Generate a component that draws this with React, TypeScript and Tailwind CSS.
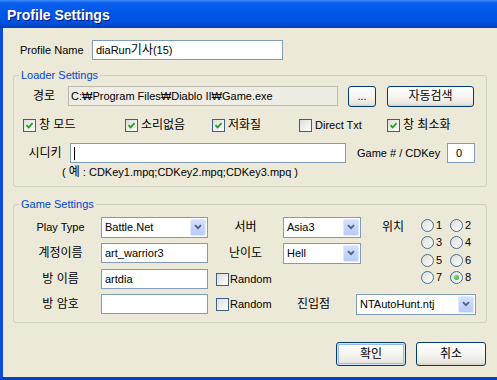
import React from "react";

const font = "font-['Liberation_Sans','Noto_Sans_CJK_KR',sans-serif]";

function Edit({ className, children }: { className: string; children?: React.ReactNode }) {
  return (
    <div className={`h-[20px] border border-[#7F9DB9] bg-white flex items-center pl-[3px] text-[11px] leading-[13px] whitespace-nowrap ${className}`}>
      {children}
    </div>
  );
}

function Combo({ className, value }: { className: string; value: string }) {
  return (
    <div className={`h-[21px] border border-[#7F9DB9] bg-white flex items-center pl-[3px] pr-[1px] ${className}`}>
      <span className="flex-1 text-[11px] leading-[13px]">{value}</span>
      <div className="w-[16px] h-[17px] rounded-[2px] border border-[#E2EAFD] bg-[linear-gradient(to_bottom,#D5E0FD,#B8CBF8)] flex items-center justify-center">
        <svg width="8" height="6" viewBox="0 0 8 6">
          <path d="M1 1.2 L4 4.2 L7 1.2" stroke="#4D6185" strokeWidth="1.8" fill="none" />
        </svg>
      </div>
    </div>
  );
}

function CheckBox({ checked }: { checked?: boolean }) {
  return (
    <span className="w-[13px] h-[13px] shrink-0 border border-[#3B6189] bg-[linear-gradient(135deg,#DCDCD7,#FFFFFF)] flex items-center justify-center">
      {checked && (
        <svg width="9" height="9" viewBox="0 0 9 9">
          <path d="M1.5 4.2 L3.6 6.4 L7.6 2.2" stroke="#21A121" strokeWidth="1.8" fill="none" />
        </svg>
      )}
    </span>
  );
}

function Radio({ on, label }: { on?: boolean; label: string }) {
  return (
    <div className="flex items-center gap-[2px]">
      <span className="w-[13px] h-[13px] rounded-full border border-[#4A6C8E] bg-[linear-gradient(135deg,#DCDCD7,#FFFFFF)] flex items-center justify-center">
        {on && <span className="w-[5px] h-[5px] rounded-full bg-[radial-gradient(circle_at_35%_35%,#7EE07A,#21A121)]" />}
      </span>
      <span className="text-[11px] leading-[13px]">{label}</span>
    </div>
  );
}

function Btn({ className, children, def }: { className: string; children: React.ReactNode; def?: boolean }) {
  return (
    <div
      className={`rounded-[3px] border border-[#003C74] bg-[linear-gradient(to_bottom,#FFFFFF,#F4F4F0_55%,#E8E6DF_88%,#D6D0C5)] flex items-center justify-center ${
        def ? "shadow-[inset_0_0_0_1px_#CEE7FF,inset_0_0_0_2px_#9DB9EB]" : ""
      } ${className}`}
    >
      {children}
    </div>
  );
}

function Checked({ w, checked, label, ko }: { w: string; checked?: boolean; label: string; ko?: boolean }) {
  return (
    <div className={`flex items-center gap-[3px] ${w}`}>
      <CheckBox checked={checked} />
      <span className={ko ? "text-[12px] leading-[14px]" : "text-[11px] leading-[13px]"}>{label}</span>
    </div>
  );
}

export default function App() {
  return (
    <div className={`w-[497px] h-[380px] flex flex-col overflow-hidden text-black ${font}`}>
      <div className="h-[28px] shrink-0 flex items-center pl-[7px] pt-[1px] bg-[linear-gradient(to_bottom,#3D8FFA_0%,#0B5FEE_10%,#0057E8_45%,#0052E0_80%,#0046CC_90%,#0A3DB0_100%)]">
        <span className="text-white font-bold text-[14px] leading-[16px] [text-shadow:1px_1px_#0A1883]">Profile Settings</span>
      </div>

      <div className="flex-1 bg-[#ECE9D8] border-l-[3px] border-b-[3px] border-l-[#0A4BD8] border-b-[#0A3FC0] flex flex-col">
        <div className="mt-[12px] h-[20px] flex items-center">
          <span className="ml-[17px] w-[72px] text-[11px] leading-[13px]">Profile Name</span>
          <Edit className="w-[191px]">
            diaRun<span className="text-[12px]">기사</span>(15)
          </Edit>
        </div>

        <fieldset className="mt-[9px] ml-[10px] w-[474px] h-[118px] border border-[#D0D0BF] rounded-[3px]">
          <legend className="ml-[5px] px-[2px] text-[11px] leading-[13px] text-[#0046D5]">Loader Settings</legend>

          <div className="mt-[4px] h-[20px] flex items-center">
            <span className="ml-[6px] w-[48px] text-center text-[12px] leading-[14px]">경로</span>
            <div className="w-[270px] h-[20px] border border-[#BDBBAD] bg-[#EFEDE3] flex items-center pl-[2px] text-[11px] leading-[13px] whitespace-nowrap">
              C:₩Program Files₩Diablo II₩Game.exe
            </div>
            <Btn className="ml-[10px] w-[28px] h-[21px]">
              <span className="text-[11px] leading-[13px]">...</span>
            </Btn>
            <Btn className="ml-[11px] w-[87px] h-[21px]">
              <span className="text-[12px] leading-[14px]">자동검색</span>
            </Btn>
          </div>

          <div className="mt-[11px] h-[16px] flex items-center pl-[9px]">
            <Checked w="w-[102px]" checked label="창 모드" ko />
            <Checked w="w-[87px]" checked label="소리없음" ko />
            <Checked w="w-[87px]" checked label="저화질" ko />
            <Checked w="w-[88px]" label="Direct Txt" />
            <Checked w="w-[80px]" checked label="창 최소화" ko />
          </div>

          <div className="mt-[10px] h-[20px] flex items-center">
            <span className="ml-[6px] w-[50px] text-center text-[12px] leading-[14px]">시디키</span>
            <Edit className="w-[276px]">
              <span className="w-[1px] h-[13px] bg-black" />
            </Edit>
            <span className="ml-[11px] w-[90px] text-[11px] leading-[13px]">Game # / CDKey</span>
            <Edit className="w-[28px] pl-[8px]">0</Edit>
          </div>

          <div className="mt-[3px] ml-[48px] text-[11px] leading-[13px] whitespace-nowrap">
            ( <span className="text-[12px]">예</span> : CDKey1.mpq;CDKey2.mpq;CDKey3.mpq )
          </div>
        </fieldset>

        <fieldset className="mt-[11px] ml-[10px] w-[474px] h-[125px] border border-[#D0D0BF] rounded-[3px]">
          <legend className="ml-[5px] px-[2px] text-[11px] leading-[13px] text-[#0046D5]">Game Settings</legend>

          <div className="mt-[5px] flex items-start">
            <div className="w-[347px] flex flex-col">
              <div className="mt-[1px] h-[20px] flex items-center">
                <span className="ml-[6px] w-[81px] text-center text-[11px] leading-[13px]">Play Type</span>
                <Combo className="w-[107px]" value="Battle.Net" />
                <span className="w-[75px] text-center text-[12px] leading-[14px]">서버</span>
                <Combo className="w-[78px]" value="Asia3" />
              </div>
              <div className="mt-[6px] h-[20px] flex items-center">
                <span className="ml-[6px] w-[81px] text-center text-[12px] leading-[14px]">계정이름</span>
                <Edit className="w-[107px]">art_warrior3</Edit>
                <span className="w-[75px] text-center text-[12px] leading-[14px]">난이도</span>
                <Combo className="w-[78px]" value="Hell" />
              </div>
              <div className="mt-[6px] h-[20px] flex items-center">
                <span className="ml-[6px] w-[81px] text-center text-[12px] leading-[14px]">방 이름</span>
                <Edit className="w-[107px]">artdia</Edit>
                <div className="ml-[8px] flex items-center gap-[1px]">
                  <CheckBox />
                  <span className="text-[11px] leading-[13px]">Random</span>
                </div>
              </div>
            </div>

            <div className="ml-[21px] mt-[1px] h-[20px] flex items-center text-[12px] leading-[14px]">위치</div>

            <div className="ml-[17px] grid grid-cols-[29px_29px] grid-rows-[18px_17px_18px_17px] items-center">
              <Radio label="1" />
              <Radio label="2" />
              <Radio label="3" />
              <Radio label="4" />
              <Radio label="5" />
              <Radio label="6" />
              <Radio label="7" />
              <Radio on label="8" />
            </div>
          </div>

          <div className="mt-[5px] h-[20px] flex items-center">
            <span className="ml-[6px] w-[81px] text-center text-[12px] leading-[14px]">방 암호</span>
            <Edit className="w-[107px]" />
            <div className="ml-[8px] w-[67px] flex items-center gap-[1px]">
              <CheckBox />
              <span className="text-[11px] leading-[13px]">Random</span>
            </div>
            <span className="w-[61px] text-center text-[12px] leading-[14px]">진입점</span>
            <Combo className="ml-[12px] w-[120px]" value="NTAutoHunt.ntj" />
          </div>
        </fieldset>

        <div className="mt-[19px] flex justify-end gap-[10px] pr-[11px]">
          <Btn def className="w-[70px] h-[24px]">
            <span className="text-[12px] leading-[14px]">확인</span>
          </Btn>
          <Btn className="w-[70px] h-[24px]">
            <span className="text-[12px] leading-[14px]">취소</span>
          </Btn>
        </div>
      </div>
    </div>
  );
}
